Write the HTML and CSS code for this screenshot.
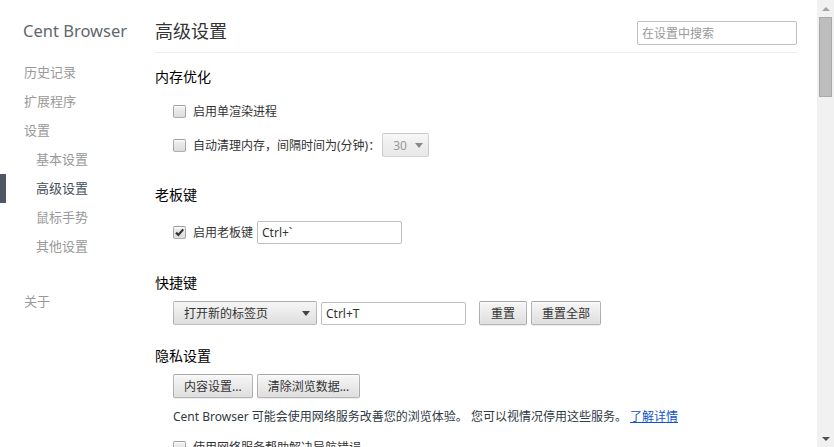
FILE: index.html
```html
<!DOCTYPE html>
<html lang="zh-CN">
  <head>
    <meta charset="UTF-8" />
    <meta name="viewport" content="width=device-width, initial-scale=1.0" />
    <title>高级设置 - Cent Browser</title>
    <link rel="stylesheet" href="styles.css">
  </head>
  <body>
    <div class="window">
      <aside class="sidebar">
        <h1 class="brand">Cent Browser</h1>
        <ul class="nav">
          <li>历史记录</li>
          <li>扩展程序</li>
          <li>设置</li>
          <li class="sub">基本设置</li>
          <li class="sub active">高级设置</li>
          <li class="sub">鼠标手势</li>
          <li class="sub">其他设置</li>
          <li class="about">关于</li>
        </ul>
      </aside>

      <main class="page">
        <header class="page-header">
          <h2 class="title">高级设置</h2>
          <input class="search" type="search" placeholder="在设置中搜索">
        </header>

        <!-- 内存优化 -->
        <section class="section memory">
          <h3>内存优化</h3>
          <label class="row"><span class="check"></span>启用单渲染进程</label>
          <label class="row">
            <span class="check"></span>自动清理内存，间隔时间为(分钟)：
            <span class="select mini disabled">30<span class="arrow"></span></span>
          </label>
        </section>

        <!-- 老板键 -->
        <section class="section boss">
          <h3>老板键</h3>
          <label class="row">
            <span class="check checked">
              <svg width="11" height="11" viewBox="0 0 11 11"><path d="M2 5.6 L4.4 8 L9.2 2.4" fill="none" stroke="#333" stroke-width="2.2"/></svg>
            </span>启用老板键
            <input class="field" type="text" value="Ctrl+`">
          </label>
        </section>

        <!-- 快捷键 -->
        <section class="section shortcut">
          <h3>快捷键</h3>
          <div class="row">
            <span class="select wide">打开新的标签页<span class="arrow"></span></span>
            <input class="field" type="text" value="Ctrl+T">
            <div class="btn-group">
              <button class="btn">重置</button>
              <button class="btn">重置全部</button>
            </div>
          </div>
        </section>

        <!-- 隐私设置 -->
        <section class="section privacy">
          <h3>隐私设置</h3>
          <div class="row btns">
            <button class="btn">内容设置...</button>
            <button class="btn">清除浏览数据...</button>
          </div>
          <p class="note">Cent Browser 可能会使用网络服务改善您的浏览体验。 您可以视情况停用这些服务。 <a href="#">了解详情</a></p>
          <label class="row"><span class="check"></span>使用网络服务帮助解决导航错误</label>
        </section>
      </main>

      <div class="scrollbar">
        <div class="sb-btn"><span class="tri up"></span></div>
        <div class="sb-thumb"></div>
        <div class="sb-track"></div>
        <div class="sb-btn"><span class="tri down"></span></div>
      </div>
    </div>
  </body>
</html>
```

FILE: styles.css
```css
html, body {
  margin: 0;
  height: 100%;
  overflow: hidden;
}
body {
  font-family: "Noto Sans", "Noto Sans CJK SC", sans-serif;
  font-size: 12px;
  color: #333;
  background: #fff;
}
.window {
  display: flex;
  height: 447px;
}

/* sidebar */
.sidebar {
  width: 155px;
  flex-shrink: 0;
}
.brand {
  margin: 0;
  height: 39px;
  padding: 19px 0 0 23px;
  font-size: 16.5px;
  line-height: 24px;
  font-weight: normal;
  color: #62676c;
}
.nav {
  list-style: none;
  margin: 0;
  padding: 0;
}
.nav li {
  height: 29px;
  line-height: 29px;
  padding-left: 24px;
  font-size: 13px;
  color: #999;
}
.nav .sub {
  padding-left: 36px;
}
.nav .active {
  border-left: 6px solid #4e5764;
  padding-left: 30px;
  color: #464e5a;
}
.nav .about {
  margin-top: 26px;
}

/* page */
.page {
  flex: 1;
  padding-right: 20px;
}
.page-header {
  display: flex;
  justify-content: space-between;
  align-items: flex-start;
  padding: 21px 0 7px;
  border-bottom: 1px solid #eee;
}
.title {
  margin: 0;
  font-size: 18px;
  line-height: 20px;
  font-weight: normal;
  color: #333;
}
.search {
  width: 160px;
  height: 24px;
  box-sizing: border-box;
  margin: 0;
  padding: 0 4px;
  border: 1px solid #bfbfbf;
  border-radius: 2px;
  font: inherit;
  outline: none;
}
.search::placeholder {
  color: #999;
}

.section {
  margin-top: 28px;
}
.section h3 {
  margin: 0;
  font-size: 14px;
  line-height: 20px;
  font-weight: normal;
  color: #000;
}
.section.memory {
  margin-top: 14px;
}
.section.shortcut {
  margin-top: 29px;
}
.section.privacy {
  margin-top: 21px;
}

.row {
  display: flex;
  align-items: center;
  min-height: 24px;
  margin: 8px 0 0 18px;
}
.row + .row {
  margin-top: 10px;
}
.memory h3 + .row {
  margin-top: 12px;
}
.boss h3 + .row {
  margin-top: 15px;
}

.check {
  display: inline-flex;
  align-items: center;
  justify-content: center;
  width: 13px;
  height: 13px;
  box-sizing: border-box;
  margin-right: 7px;
  border: 1px solid rgba(0, 0, 0, 0.28);
  border-radius: 2px;
  background: linear-gradient(#f4f4f4, #e8e8e8 40%, #dcdcdc);
  box-shadow: inset 0 1px 1px rgba(255, 255, 255, 0.8);
}

.field {
  width: 145px;
  height: 23px;
  box-sizing: border-box;
  margin: 0 0 0 4px;
  padding: 0 4px;
  border: 1px solid #bfbfbf;
  border-radius: 2px;
  font: inherit;
  color: #333;
  outline: none;
}

.select {
  display: inline-flex;
  align-items: center;
  justify-content: space-between;
  height: 24px;
  box-sizing: border-box;
  padding: 0 6px 0 10px;
  border: 1px solid rgba(0, 0, 0, 0.22);
  border-radius: 2px;
  background: linear-gradient(#f6f6f6, #ededed 38%, #dedede);
  color: #333;
}
.select.mini {
  width: 47px;
  margin-left: 2px;
  padding-right: 5px;
}
.select.wide {
  width: 144px;
}
.select.disabled {
  color: #999;
  background: linear-gradient(#f8f8f8, #f0f0f0 38%, #e8e8e8);
  border-color: rgba(0, 0, 0, 0.14);
}
.arrow {
  width: 0;
  height: 0;
  border-left: 4px solid transparent;
  border-right: 4px solid transparent;
  border-top: 5px solid #444;
}
.disabled .arrow {
  border-top-color: #888;
}

.btn-group {
  display: flex;
  gap: 4px;
  margin-left: 13px;
}
.btn {
  height: 24px;
  min-width: 48px;
  margin: 0;
  padding: 0 10px;
  border: 1px solid rgba(0, 0, 0, 0.25);
  border-radius: 2px;
  background: linear-gradient(#f6f6f6, #ededed 38%, #dedede);
  box-shadow: 0 1px 0 rgba(0, 0, 0, 0.08), inset 0 1px 2px rgba(255, 255, 255, 0.75);
  font: inherit;
  color: #333;
}
.btns {
  gap: 4px;
}

.note {
  margin: 9px 0 0 18px;
  line-height: 20px;
  color: #303942;
}
.note a {
  color: #15c;
}

/* fake scrollbar */
.scrollbar {
  width: 17px;
  flex-shrink: 0;
  display: flex;
  flex-direction: column;
  align-items: center;
  background: #f1f1f1;
}
.sb-btn {
  height: 17px;
  width: 17px;
  display: flex;
  align-items: center;
  justify-content: center;
}
.sb-thumb {
  width: 13px;
  height: 80px;
  box-sizing: border-box;
  background: #bdbdbd;
  border: 1px solid #a9a9a9;
}
.sb-track {
  flex: 1;
}
.tri {
  width: 0;
  height: 0;
  border-left: 4px solid transparent;
  border-right: 4px solid transparent;
}
.tri.up {
  border-bottom: 4px solid #a3a3a3;
}
.tri.down {
  border-top: 4px solid #505050;
}
```
